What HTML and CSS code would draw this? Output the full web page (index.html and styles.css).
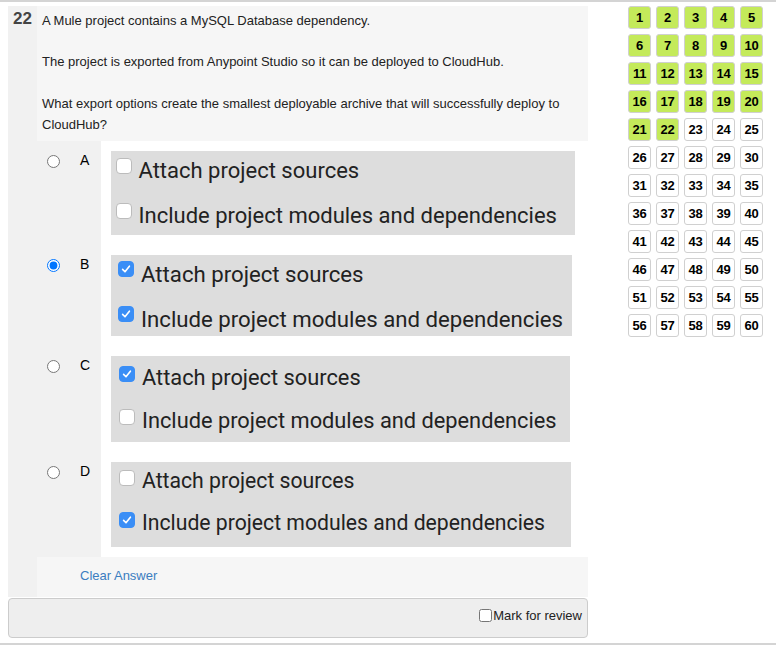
FILE: index.html
```html
<!DOCTYPE html>
<html>
<head>
<meta charset="utf-8">
<link rel="stylesheet" href="styles.css">
</head>
<body>
<div class="page">
  <div class="main">
    <div class="qhead">
      <div class="qnum">22</div>
      <div class="qtext">A Mule project contains a MySQL Database dependency.<br><br>The project is exported from Anypoint Studio so it can be deployed to CloudHub.<br><br>What export options create the smallest deployable archive that will successfully deploy to CloudHub?</div>
    </div>

    <div class="opt opt-first">
      <div class="opt-side"><input class="radio" type="radio" name="ans"><span class="letter">A</span></div>
      <div class="opt-body">
        <div class="cbbox box-a">
          <div class="cbline"><span class="cb"></span><span class="cbtext">Attach project sources</span></div>
          <div class="cbline"><span class="cb"></span><span class="cbtext">Include project modules and dependencies</span></div>
        </div>
      </div>
    </div>

    <div class="opt">
      <div class="opt-side"><input class="radio" type="radio" name="ans" checked><span class="letter">B</span></div>
      <div class="opt-body">
        <div class="cbbox box-b">
          <div class="cbline"><span class="cb on"><svg viewBox="0 0 16 16"><path d="M4.6 8.4 L7 10.8 L11.4 5.2"/></svg></span><span class="cbtext">Attach project sources</span></div>
          <div class="cbline"><span class="cb on"><svg viewBox="0 0 16 16"><path d="M4.6 8.4 L7 10.8 L11.4 5.2"/></svg></span><span class="cbtext">Include project modules and dependencies</span></div>
        </div>
      </div>
    </div>

    <div class="opt">
      <div class="opt-side"><input class="radio" type="radio" name="ans"><span class="letter">C</span></div>
      <div class="opt-body">
        <div class="cbbox box-c">
          <div class="cbline"><span class="cb on"><svg viewBox="0 0 16 16"><path d="M4.6 8.4 L7 10.8 L11.4 5.2"/></svg></span><span class="cbtext">Attach project sources</span></div>
          <div class="cbline"><span class="cb"></span><span class="cbtext">Include project modules and dependencies</span></div>
        </div>
      </div>
    </div>

    <div class="opt">
      <div class="opt-side"><input class="radio" type="radio" name="ans"><span class="letter">D</span></div>
      <div class="opt-body">
        <div class="cbbox box-d">
          <div class="cbline"><span class="cb"></span><span class="cbtext">Attach project sources</span></div>
          <div class="cbline"><span class="cb on"><svg viewBox="0 0 16 16"><path d="M4.6 8.4 L7 10.8 L11.4 5.2"/></svg></span><span class="cbtext">Include project modules and dependencies</span></div>
        </div>
      </div>
    </div>

    <div class="clear-row">
      <div class="clear-inner"><a class="clear-link">Clear Answer</a></div>
    </div>

    <div class="panel">
      <label class="review"><input class="review-cb" type="checkbox">Mark for review</label>
    </div>
  </div>

  <div class="nav">
    <div class="cell done">1</div><div class="cell done">2</div><div class="cell done">3</div><div class="cell done">4</div><div class="cell done">5</div>
    <div class="cell done">6</div><div class="cell done">7</div><div class="cell done">8</div><div class="cell done">9</div><div class="cell done">10</div>
    <div class="cell done">11</div><div class="cell done">12</div><div class="cell done">13</div><div class="cell done">14</div><div class="cell done">15</div>
    <div class="cell done">16</div><div class="cell done">17</div><div class="cell done">18</div><div class="cell done">19</div><div class="cell done">20</div>
    <div class="cell done">21</div><div class="cell done">22</div><div class="cell">23</div><div class="cell">24</div><div class="cell">25</div>
    <div class="cell">26</div><div class="cell">27</div><div class="cell">28</div><div class="cell">29</div><div class="cell">30</div>
    <div class="cell">31</div><div class="cell">32</div><div class="cell">33</div><div class="cell">34</div><div class="cell">35</div>
    <div class="cell">36</div><div class="cell">37</div><div class="cell">38</div><div class="cell">39</div><div class="cell">40</div>
    <div class="cell">41</div><div class="cell">42</div><div class="cell">43</div><div class="cell">44</div><div class="cell">45</div>
    <div class="cell">46</div><div class="cell">47</div><div class="cell">48</div><div class="cell">49</div><div class="cell">50</div>
    <div class="cell">51</div><div class="cell">52</div><div class="cell">53</div><div class="cell">54</div><div class="cell">55</div>
    <div class="cell">56</div><div class="cell">57</div><div class="cell">58</div><div class="cell">59</div><div class="cell">60</div>
  </div>
</div>
</body>
</html>
```

FILE: styles.css
```css
html, body {
  margin: 0;
  padding: 0;
  background: #ffffff;
}

body {
  font-family: "Liberation Sans", Arial, sans-serif;
  color: #222222;
}

.page {
  box-sizing: border-box;
  width: 776px;
  height: 645px;
  border-top: 2px solid #d4d4d4;
  border-bottom: 2px solid #d4d4d4;
  display: flex;
  align-items: flex-start;
}

.main {
  width: 580px;
  margin-left: 8px;
  margin-top: 4px;
  display: flex;
  flex-direction: column;
}

/* question head */
.qhead {
  display: flex;
  background: #f1f1f1;
}

.qnum {
  width: 29px;
  box-sizing: border-box;
  padding: 3px 0 0 5px;
  font-size: 17px;
  line-height: 20px;
  font-weight: bold;
  color: #444444;
}

.qtext {
  flex: 1;
  background: #f6f6f6;
  padding: 5px 8px 6px 5px;
  font-size: 13px;
  line-height: 20.7px;
  color: #222222;
}

/* options */
.opt {
  display: flex;
}

.opt-side {
  width: 93px;
  flex: none;
  box-sizing: border-box;
  background: #f1f1f1;
  display: flex;
  align-items: flex-start;
  padding: 14px 0 0 39px;
}

.radio {
  width: 13px;
  height: 13px;
  margin: 0;
  flex: none;
}

.letter {
  margin-left: 20px;
  margin-top: -3px;
  font-size: 14px;
  line-height: 16px;
  color: #000000;
}

.opt-body {
  flex: 1;
  background: #ffffff;
  padding: 10px 0 10px 10px;
}

.cbbox {
  box-sizing: border-box;
  background: #dddddd;
  display: flex;
  flex-direction: column;
  font-family: Roboto, "Liberation Sans", sans-serif;
  color: #222222;
}

.cbline {
  display: flex;
  align-items: flex-start;
  height: 30px;
  line-height: 30px;
  white-space: nowrap;
}

.cb {
  width: 16px;
  height: 16px;
  box-sizing: border-box;
  flex: none;
  border-radius: 4px;
  background: #ffffff;
  border: 1px solid #bcbcbc;
  margin-right: 7px;
  display: flex;
  align-items: center;
  justify-content: center;
}

.cb.on {
  background: #3a8ef6;
  border-color: #3a8ef6;
}

.cb svg {
  width: 16px;
  height: 16px;
  flex: none;
}

.cb svg path {
  fill: none;
  stroke: #ffffff;
  stroke-width: 1.6;
  stroke-linecap: round;
  stroke-linejoin: round;
}

.box-a {
  width: 464px;
  height: 84px;
  padding: 5px 0 0 4.5px;
  gap: 15px;
  font-size: 22px;
}
.box-a .cb { margin-top: 1.5px; }

.box-b {
  width: 461px;
  height: 81px;
  padding: 3.4px 0 0 7px;
  gap: 15px;
  font-size: 22.2px;
}
.box-b .cb { margin-top: 2px; }

.box-c {
  width: 459px;
  height: 86px;
  padding: 6.6px 0 0 8px;
  gap: 13px;
  font-size: 21.8px;
}
.box-c .cb { margin-top: 3px; }

.box-d {
  width: 460px;
  height: 85px;
  padding: 3.8px 0 0 8px;
  gap: 12px;
  font-size: 21.2px;
}
.box-d .cb { margin-top: 4px; }

/* clear row */
.clear-row {
  background: #f1f1f1;
  padding-left: 29px;
}

.clear-inner {
  background: #f6f6f6;
  height: 40px;
  line-height: 38px;
  padding-left: 43px;
  font-size: 13px;
}

.clear-link {
  color: #3b7dc0;
  cursor: pointer;
}

/* bottom panel */
.panel {
  margin-top: 1px;
  box-sizing: border-box;
  height: 40px;
  border: 1px solid #cccccc;
  border-radius: 4px;
  background: #eeeeee;
  display: flex;
  justify-content: flex-end;
  align-items: center;
  padding: 0 5px 6px 0;
}

.review {
  display: flex;
  align-items: center;
  font-size: 13px;
  color: #222222;
}

.review-cb {
  margin: 0 1px 0 0;
  width: 13px;
  height: 13px;
}

/* navigation grid */
.nav {
  margin-left: 40px;
  padding-top: 4px;
  display: grid;
  grid-template-columns: repeat(5, 23px);
  grid-auto-rows: 23px;
  gap: 5px;
}

.cell {
  box-sizing: border-box;
  border: 1px solid #d0d0d0;
  border-radius: 3px;
  background: #ffffff;
  font-size: 13px;
  font-weight: bold;
  color: #000000;
  display: flex;
  align-items: center;
  justify-content: center;
  letter-spacing: -0.3px;
}

.cell.done {
  background: #c4ea5a;
}
```
